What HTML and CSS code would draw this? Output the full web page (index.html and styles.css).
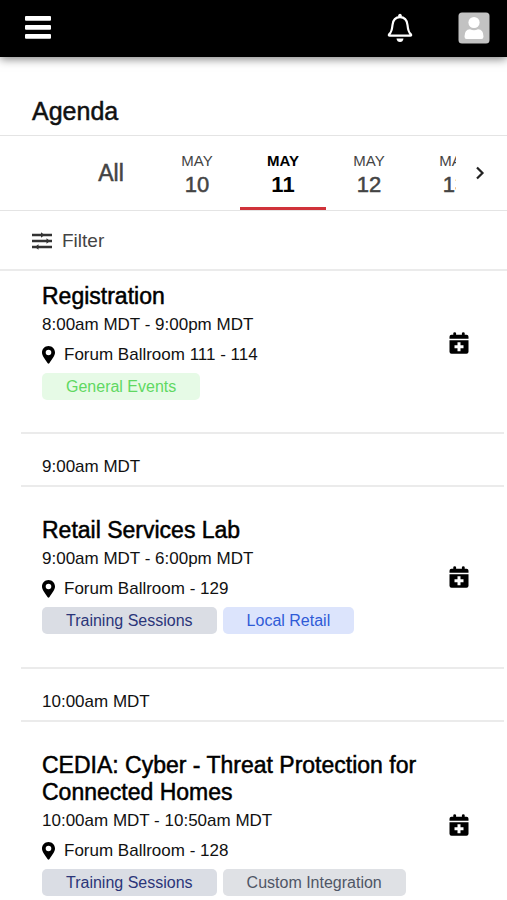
FILE: index.html
```html
<!DOCTYPE html>
<html lang="en">
<head>
<meta charset="utf-8">
<meta name="viewport" content="width=device-width, initial-scale=1">
<title>Agenda</title>
<link rel="stylesheet" href="styles.css">
</head>
<body>
<svg class="sprite" aria-hidden="true">
  <symbol id="pin" viewBox="0 0 13 18">
    <path fill-rule="evenodd" d="M6.500 0C2.900 0 0 2.900 0 6.500C0 9.500 2.500 12.600 5.700 17.300Q6.500 18.200 7.300 17.300C10.500 12.600 13 9.500 13 6.500C13 2.900 10.100 0 6.500 0ZM6.500 3.700a2.800 2.800 0 1 1 0 5.600a2.800 2.800 0 1 1 0-5.600Z"/>
  </symbol>
  <symbol id="calendar-plus" viewBox="0 0 20 22">
    <path d="M0.500 6.800V4.800Q0.500 2.800 2.500 2.800H4.300V1.200Q4.300 0.300 5.700 0.300T7.100 1.200V2.800H12.900V1.200Q12.900 0.300 14.300 0.300T15.700 1.200V2.800H17.500Q19.500 2.800 19.500 4.800V6.800Z"/>
    <path fill-rule="evenodd" d="M0.500 8.200H19.500V19.800Q19.500 21.800 17.500 21.800H2.500Q0.500 21.800 0.500 19.800ZM8.500 10.200V13.200H5.500V16.300H8.500V19.300H11.500V16.300H14.500V13.200H11.500V10.200Z"/>
  </symbol>
</svg>

<header class="topbar">
  <button class="icon-button" type="button" aria-label="Menu">
    <svg width="26" height="24" viewBox="0 0 26 24" fill="#fff"><rect width="26" height="4.800" rx="1"/><rect y="9" width="26" height="4.800" rx="1"/><rect y="18" width="26" height="4.800" rx="1"/></svg>
  </button>
  <div class="topbar-actions">
    <button class="icon-button" type="button" aria-label="Notifications">
      <svg width="26" height="30" viewBox="0 0 26 30"><path d="M13 4.200C8.500 4.200 6 7.500 5.500 12C5 17 4.500 19.500 2.200 21.200Q1.200 22.600 2.800 22.600H23.200Q24.800 22.600 23.800 21.200C21.500 19.500 21 17 20.500 12C20 7.500 17.500 4.200 13 4.200Z" fill="none" stroke="#fff" stroke-width="2.200"/><path d="M11.300 4.200V2.200Q11.300 0.700 13 0.700T14.700 2.200V4.200Z" fill="#fff"/><path d="M9.500 25.500H16.500Q16 29 13 29T9.500 25.500Z" fill="#fff"/></svg>
    </button>
    <button class="icon-button" type="button" aria-label="Profile">
      <svg width="32" height="32" viewBox="0 0 32 32"><rect x="0.500" y="0.500" width="31" height="31" rx="3.500" fill="#c2c2c2"/><circle cx="16" cy="10.500" r="5.600" fill="#fff"/><path d="M6.500 24.500Q6.500 17.500 12 17.200Q16 19.200 20 17.200Q25.500 17.500 25.500 24.500Q25.500 27 23.500 27H8.500Q6.500 27 6.500 24.500Z" fill="#fff"/></svg>
    </button>
  </div>
</header>

<main>
  <h1 class="page-title">Agenda</h1>

  <nav class="days" aria-label="Days">
    <div class="days-strip">
      <button class="day day-all" type="button">All</button>
      <button class="day" type="button"><span class="month">MAY</span><span class="date">10</span></button>
      <button class="day day-active" type="button" aria-current="date"><span class="month">MAY</span><span class="date">11</span></button>
      <button class="day" type="button"><span class="month">MAY</span><span class="date">12</span></button>
      <button class="day" type="button"><span class="month">MAY</span><span class="date">13</span></button>
    </div>
    <button class="days-next" type="button" aria-label="Next days">
      <svg width="10" height="14" viewBox="0 0 10 14" fill="none" stroke="#222" stroke-width="2.200"><path d="M2 1.500L7.500 7L2 12.500"/></svg>
    </button>
  </nav>

  <button class="filter" type="button">
    <svg width="20" height="18" viewBox="0 0 20 18" fill="#333"><path d="M0 1.700H20V4.200H0ZM0 7.700H20V10.200H0ZM0 13.700H20V16.200H0Z"/><path d="M9 0.200L12.500 3L9 5.700ZM14.500 6.200L18 9L14.500 11.700ZM6.500 12.200L3 15L6.500 17.700Z"/></svg>
    Filter
  </button>

  <div class="agenda">
    <article class="session session-first">
      <div class="session-body">
        <h2 class="session-title">Registration</h2>
        <p class="session-time">8:00am MDT - 9:00pm MDT</p>
        <p class="session-place"><svg class="pin"><use href="#pin"/></svg>Forum Ballroom 111 - 114</p>
        <div class="tags"><span class="tag tag-green">General Events</span></div>
      </div>
      <button class="add" type="button" aria-label="Add to calendar"><svg width="20" height="22"><use href="#calendar-plus"/></svg></button>
    </article>

    <h3 class="slot">9:00am MDT</h3>
    <article class="session">
      <div class="session-body">
        <h2 class="session-title">Retail Services Lab</h2>
        <p class="session-time">9:00am MDT - 6:00pm MDT</p>
        <p class="session-place"><svg class="pin"><use href="#pin"/></svg>Forum Ballroom - 129</p>
        <div class="tags"><span class="tag tag-navy">Training Sessions</span><span class="tag tag-blue">Local Retail</span></div>
      </div>
      <button class="add" type="button" aria-label="Add to calendar"><svg width="20" height="22"><use href="#calendar-plus"/></svg></button>
    </article>

    <h3 class="slot">10:00am MDT</h3>
    <article class="session">
      <div class="session-body">
        <h2 class="session-title">CEDIA: Cyber - Threat Protection for Connected Homes</h2>
        <p class="session-time">10:00am MDT - 10:50am MDT</p>
        <p class="session-place"><svg class="pin"><use href="#pin"/></svg>Forum Ballroom - 128</p>
        <div class="tags"><span class="tag tag-navy">Training Sessions</span><span class="tag tag-gray">Custom Integration</span></div>
      </div>
      <button class="add" type="button" aria-label="Add to calendar"><svg width="20" height="22"><use href="#calendar-plus"/></svg></button>
    </article>
  </div>
</main>
</body>
</html>
```
FILE: styles.css
```css
* {
  box-sizing: border-box;
}

body {
  margin: 0;
  background: #fff;
  color: #111;
  font-family: "Liberation Sans", Arial, sans-serif;
  font-size: 17px;
}

h1, h2, h3, p {
  margin: 0;
  font-weight: 400;
}

button {
  margin: 0;
  padding: 0;
  border: 0;
  background: none;
  color: inherit;
  font: inherit;
  cursor: pointer;
}

svg {
  display: block;
  flex: none;
}

.sprite {
  position: absolute;
  width: 0;
  height: 0;
}

.topbar {
  display: flex;
  align-items: center;
  justify-content: space-between;
  height: 57px;
  padding: 0 17px 2px 25px;
  background: #000;
  box-shadow: 0 2px 9px rgba(0, 0, 0, 0.5);
}

.topbar-actions {
  display: flex;
  align-items: center;
  gap: 45px;
}

/* Medium weight between the regular and bold faces */
.page-title,
.session-title,
.day-all,
.date {
  -webkit-text-stroke: 0.5px currentColor;
}

.page-title {
  padding: 39px 32px 9px;
  border-bottom: 1px solid #e4e4e4;
  font-size: 25px;
  line-height: 30px;
}

.days {
  display: flex;
  height: 75px;
  padding-left: 68px;
  border-bottom: 1px solid #e4e4e4;
  color: #444;
}

.days-strip {
  display: flex;
  flex: 1;
  min-width: 0;
  overflow: hidden;
}

.day {
  display: flex;
  flex: none;
  flex-direction: column;
  align-items: center;
  justify-content: center;
  width: 86px;
  padding-top: 4px;
  border-bottom: 3px solid transparent;
}

.day-all {
  font-size: 23px;
}

.month {
  font-size: 15px;
  line-height: 22px;
}

.date {
  font-size: 22px;
  line-height: 26px;
}

.day-active {
  border-bottom-color: #d0323a;
  color: #000;
  font-weight: 700;
}

.day-active .date {
  -webkit-text-stroke: 0;
}

.days-next {
  display: flex;
  align-items: center;
  justify-content: center;
  width: 51px;
  padding-right: 4px;
}

.filter {
  display: flex;
  align-items: center;
  gap: 10px;
  width: 100%;
  height: 60px;
  padding: 2px 0 0 32px;
  border-bottom: 2px solid #ebebeb;
  color: #444;
  font-size: 19px;
}

.agenda {
  margin: 0 3px 0 21px;
}

.session {
  display: flex;
  align-items: center;
  padding: 30px 35px 33px 21px;
  border-bottom: 2px solid #ebebeb;
}

.session-first {
  padding-top: 12px;
  padding-bottom: 32px;
}

.session-body {
  flex: 1;
  min-width: 0;
  padding-right: 20px;
}

.session-title {
  color: #000;
  font-size: 23px;
  line-height: 27px;
}

.session-time {
  line-height: 30px;
}

.session-place {
  display: flex;
  align-items: center;
  gap: 9px;
  line-height: 30px;
}

.pin {
  width: 13px;
  height: 18px;
  fill: #000;
}

.tags {
  display: flex;
  flex-wrap: wrap;
  gap: 6px;
  padding-top: 3px;
}

.tag {
  padding: 0 24px;
  border-radius: 5px;
  font-size: 16px;
  line-height: 27px;
}

.tag-green {
  background: #e6fae6;
  color: #5fd862;
}

.tag-navy {
  background: #dadde4;
  color: #2b3579;
}

.tag-blue {
  background: #dce4fc;
  color: #2f5bd7;
}

.tag-gray {
  background: #dfe1e5;
  color: #4f5666;
}

.add {
  padding-top: 2px;
  fill: #000;
}

.slot {
  padding: 19px 21px 4px;
  border-bottom: 2px solid #ebebeb;
  font-size: 17px;
  line-height: 28px;
}
```
